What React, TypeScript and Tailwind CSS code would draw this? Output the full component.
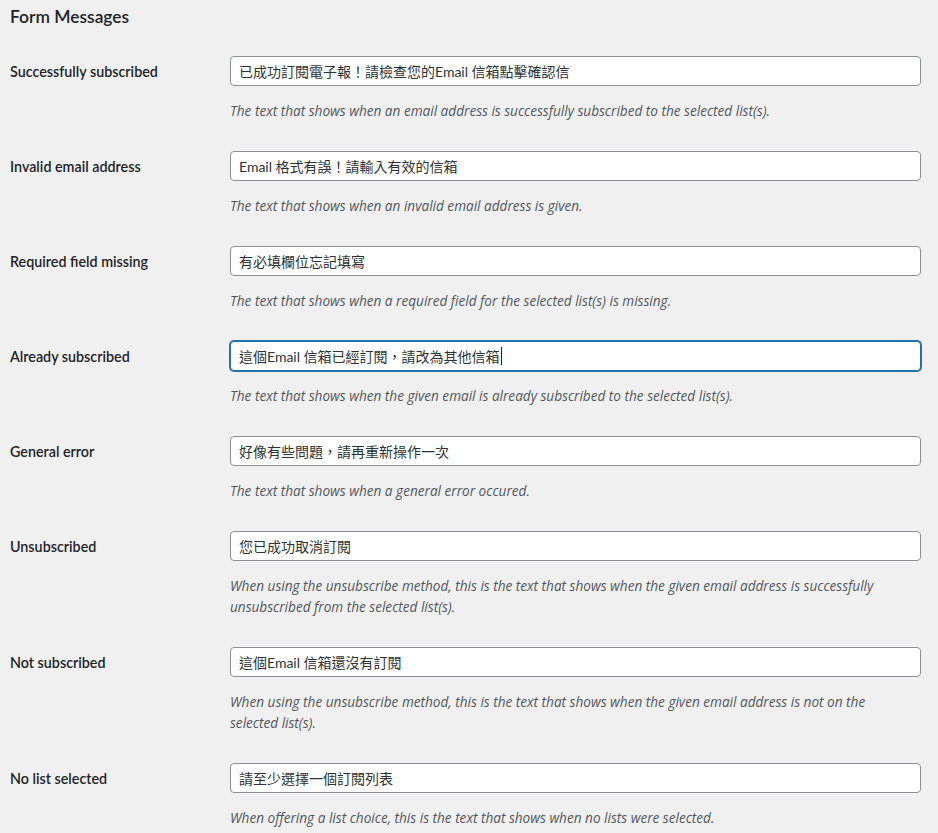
import React from "react";

type Row = { label: string; value: string; desc: string[]; focused?: boolean };

const rows: Row[] = [
  {
    label: "Successfully subscribed",
    value: "已成功訂閱電子報！請檢查您的Email 信箱點擊確認信",
    desc: ["The text that shows when an email address is successfully subscribed to the selected list(s)."],
  },
  {
    label: "Invalid email address",
    value: "Email 格式有誤！請輸入有效的信箱",
    desc: ["The text that shows when an invalid email address is given."],
  },
  {
    label: "Required field missing",
    value: "有必填欄位忘記填寫",
    desc: ["The text that shows when a required field for the selected list(s) is missing."],
  },
  {
    label: "Already subscribed",
    value: "這個Email 信箱已經訂閱，請改為其他信箱",
    desc: ["The text that shows when the given email is already subscribed to the selected list(s)."],
    focused: true,
  },
  {
    label: "General error",
    value: "好像有些問題，請再重新操作一次",
    desc: ["The text that shows when a general error occured."],
  },
  {
    label: "Unsubscribed",
    value: "您已成功取消訂閱",
    desc: [
      "When using the unsubscribe method, this is the text that shows when the given email address is successfully",
      "unsubscribed from the selected list(s).",
    ],
  },
  {
    label: "Not subscribed",
    value: "這個Email 信箱還沒有訂閱",
    desc: [
      "When using the unsubscribe method, this is the text that shows when the given email address is not on the",
      "selected list(s).",
    ],
  },
  {
    label: "No list selected",
    value: "請至少選擇一個訂閱列表",
    desc: ["When offering a list choice, this is the text that shows when no lists were selected."],
  },
];

export default function App() {
  return (
    <div
      className="min-h-[833px] w-full bg-[#f0f0f1] pl-[10px] pr-[17px] text-[#1d2327]"
      style={{ fontFamily: '"Lato", "Noto Sans CJK TC", sans-serif' }}
    >
      <div className="flex h-[41px] items-start pt-[5px]">
        <h3 className="text-[17.4px] font-semibold leading-[24px] text-[#1d2327]">Form Messages</h3>
      </div>
      {rows.map((r) => (
        <div key={r.label} className="flex py-[15px]">
          <div className="mt-[1px] flex h-[30px] w-[220px] shrink-0 items-center text-[14.3px] font-semibold text-[#1d2327]">
            {r.label}
          </div>
          <div className="flex-1">
            <div
              className={
                r.focused
                  ? "flex h-[30px] items-center rounded-[4px] border border-[#2271b1] bg-white px-[8px] text-[14px] text-[#2c3338] shadow-[0_0_0_1px_#2271b1]"
                  : "flex h-[30px] items-center rounded-[4px] border border-[#8c8f94] bg-white px-[8px] text-[14px] text-[#2c3338]"
              }
            >
              <span className="whitespace-nowrap">{r.value}</span>
              {r.focused && <span className="ml-[1px] inline-block h-[18px] w-[1px] bg-[#1d2327]" />}
            </div>
            <div
              className="mt-[14px] text-[13.6px] italic leading-[21px] text-[#50575e]"
              style={{ fontFamily: '"Open Sans", sans-serif' }}
            >
              {r.desc.map((d) => (
                <div key={d} className="whitespace-nowrap">
                  {d}
                </div>
              ))}
            </div>
          </div>
        </div>
      ))}
    </div>
  );
}
